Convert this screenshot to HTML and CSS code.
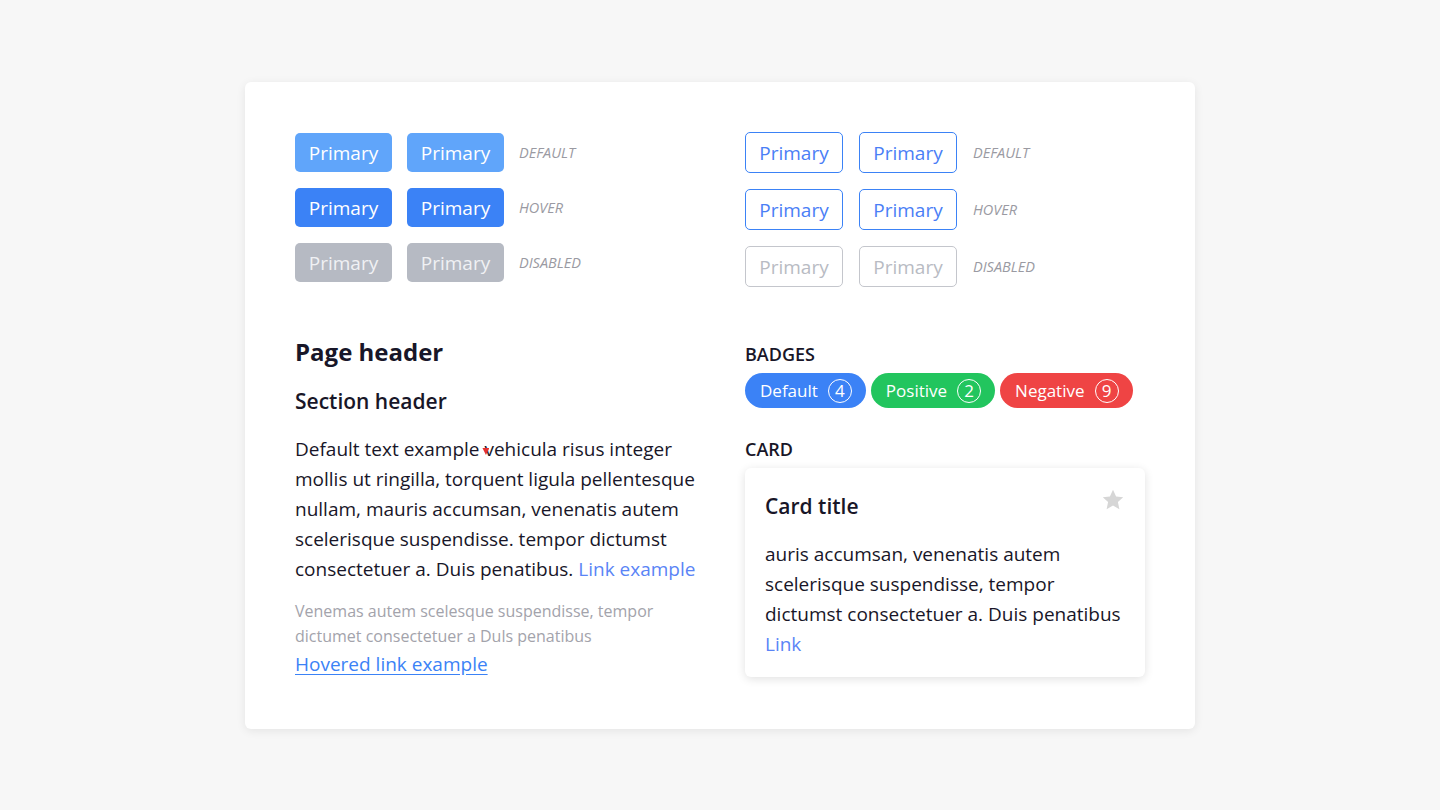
FILE: index.html
```html
<!DOCTYPE html>
<html lang="en">
<head>
<meta charset="utf-8">
<title>Style guide</title>
<link rel="stylesheet" href="styles.css">
</head>
<body>
<main class="sheet">
  <section class="grid">
    <div class="col">
      <div class="btn-grid">
        <button class="btn fill">Primary</button><button class="btn fill">Primary</button><span class="state">DEFAULT</span>
        <button class="btn fill hover">Primary</button><button class="btn fill hover">Primary</button><span class="state">HOVER</span>
        <button class="btn fill disabled">Primary</button><button class="btn fill disabled">Primary</button><span class="state">DISABLED</span>
      </div>
    </div>
    <div class="col">
      <div class="btn-grid outline-grid">
        <button class="btn outline">Primary</button><button class="btn outline">Primary</button><span class="state">DEFAULT</span>
        <button class="btn outline">Primary</button><button class="btn outline">Primary</button><span class="state">HOVER</span>
        <button class="btn outline disabled">Primary</button><button class="btn outline disabled">Primary</button><span class="state">DISABLED</span>
      </div>
    </div>

    <div class="col typo">
      <h1 class="page-header">Page header</h1>
      <h2 class="section-header">Section header</h2>
      <p class="body-text">Default text example <span class="mark-wrap">vehicula</span> risus integer mollis ut ringilla, torquent ligula pellentesque nullam, mauris accumsan, venenatis autem scelerisque suspendisse. tempor dictumst consectetuer a. Duis penatibus. <a class="link" href="#">Link example</a></p>
      <p class="muted">Venemas autem scelesque suspendisse, tempor dictumet consectetuer a Duls penatibus</p>
      <a class="link hovered" href="#">Hovered link example</a>
    </div>

    <div class="col">
      <h3 class="label">BADGES</h3>
      <div class="badges">
        <span class="badge blue">Default <span class="count">4</span></span>
        <span class="badge green">Positive <span class="count">2</span></span>
        <span class="badge red">Negative <span class="count">9</span></span>
      </div>
      <h3 class="label card-label">CARD</h3>
      <article class="card">
        <header class="card-head">
          <h4 class="card-title">Card title</h4>
          <svg class="star" viewBox="0 0 24 24" width="24" height="24"><path d="M12 1.8l3.1 6.6 7.1.8-5.3 4.9 1.5 7.1L12 17.6l-6.4 3.6 1.5-7.1-5.3-4.9 7.1-.8z" fill="#d6d6d6"/></svg>
        </header>
        <p class="card-text">auris accumsan, venenatis autem scelerisque suspendisse, tempor dictumst consectetuer a. Duis penatibus <a class="link" href="#">Link</a></p>
      </article>
    </div>
  </section>
</main>
</body>
</html>
```
FILE: styles.css
```css
* { box-sizing: border-box; }
html, body { margin: 0; padding: 0; }
body {
  background: #f7f7f7;
  font-family: "Segoe UI", "Open Sans", "Noto Sans", sans-serif;
  color: #1a1a2e;
  min-height: 810px;
}
.sheet {
  width: 950px;
  margin: 82px auto 0;
  background: #fff;
  border-radius: 6px;
  box-shadow: 0 2px 10px rgba(0,0,0,0.08);
  padding: 50px 50px 50px;
}
.grid {
  display: grid;
  grid-template-columns: 400px 400px;
  column-gap: 50px;
  row-gap: 50px;
}
.col { display: flex; flex-direction: column; align-items: flex-start; }

.btn-grid {
  display: grid;
  grid-template-columns: 97px 97px auto;
  column-gap: 15px;
  row-gap: 16px;
  align-items: center;
  padding-top: 1px;
}
.outline-grid { grid-template-columns: 98px 98px auto; column-gap: 16px; padding-top: 0; }
.btn {
  font-family: inherit;
  font-size: 19px;
  height: 39px;
  padding: 0;
  border-radius: 5px;
  border: none;
  color: #fff;
  background: #60a5fa;
  cursor: pointer;
}
.btn.hover { background: #3b82f6; }
.btn.fill.disabled { background: #b6bac3; color: #f0f1f4; }
.btn.outline {
  height: 41px;
  background: #fff;
  border: 1px solid #3b82f6;
  color: #4a7ef6;
  border-radius: 5px;
}
.btn.outline.disabled { border-color: #c4c6cc; color: #b8bbc3; }
.state {
  font-size: 14.5px;
  font-style: italic;
  color: #9a9aa2;
}

.page-header {
  margin: 0;
  font-size: 24px;
  font-weight: 700;
  line-height: 30px;
  color: #181628;
}
.section-header {
  margin: 19px 0 0;
  font-size: 21px;
  font-weight: 600;
  line-height: 30px;
  color: #181628;
}
.body-text {
  margin: 18px -12px 0 0;
  font-size: 19px;
  line-height: 30px;
  color: #181628;
}
.mark-wrap { position: relative; }
.mark-wrap::before {
  content: "";
  position: absolute;
  left: -2px;
  top: 12px;
  width: 7px;
  height: 7px;
  background: #e53030;
  clip-path: polygon(0 0, 100% 0, 50% 100%);
}
.link { color: #5a84f6; text-decoration: none; }
.muted {
  margin: 15px 0 0;
  font-size: 16px;
  line-height: 25px;
  color: #a3a3ab;
}
.link.hovered {
  font-size: 19px;
  line-height: 30px;
  color: #3b82f6;
  text-decoration: underline;
  text-underline-offset: 3px;
}

.label {
  margin: 2px 0 0;
  font-size: 18px;
  font-weight: 600;
  line-height: 30px;
  color: #181628;
}
.badges { display: flex; gap: 5px; margin-top: 4px; }
.badge {
  display: inline-flex;
  align-items: center;
  gap: 10px;
  height: 35px;
  padding: 0 14px 0 15px;
  border-radius: 18px;
  color: #fff;
  font-size: 17px;
}
.badge.blue { background: #3b82f6; }
.badge.green { background: #22c55e; }
.badge.red { background: #ef4444; }
.count {
  width: 24px;
  height: 24px;
  border: 1px solid #fff;
  border-radius: 50%;
  display: inline-flex;
  align-items: center;
  justify-content: center;
  font-size: 17px;
  line-height: 1;
}
.card-label { margin-top: 26px; }
.card {
  margin-top: 4px;
  width: 400px;
  background: #fff;
  border-radius: 6px;
  box-shadow: 0 2px 10px rgba(0,0,0,0.12);
  padding: 20px 20px 18px;
}
.card-head { display: flex; justify-content: space-between; align-items: flex-start; }
.card-title {
  margin: 0;
  font-size: 21px;
  font-weight: 600;
  line-height: 36px;
  color: #181628;
}
.star { display: block; margin-top: 0; }
.card-text {
  margin: 15px 0 0;
  font-size: 19px;
  line-height: 30px;
  color: #181628;
}
```
